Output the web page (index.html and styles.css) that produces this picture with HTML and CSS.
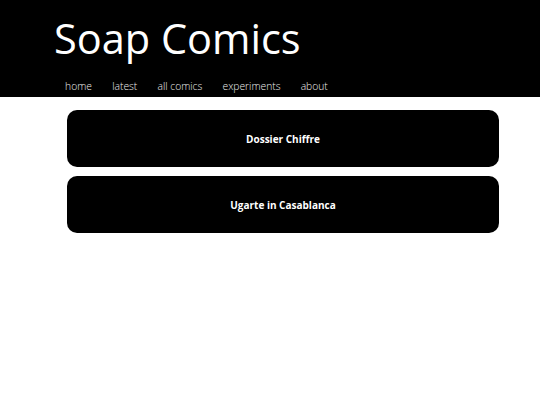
FILE: index.html
```html
<!DOCTYPE html>
<html>
<head>
<meta charset="utf-8">
<link rel="stylesheet" href="styles.css">
</head>
<body>
<header class="header">
  <h1 class="title">Soap Comics</h1>
  <nav class="nav">
    <a class="nav-link" href="#">home</a>
    <a class="nav-link" href="#">latest</a>
    <a class="nav-link" href="#">all comics</a>
    <a class="nav-link" href="#">experiments</a>
    <a class="nav-link" href="#">about</a>
  </nav>
</header>
<main class="list">
  <a class="card" href="#">Dossier Chiffre</a>
  <a class="card" href="#">Ugarte in Casablanca</a>
</main>
</body>
</html>
```
FILE: styles.css
```css
html, body {
  margin: 0;
  padding: 0;
  background: #fff;
  font-family: "Open Sans", "Liberation Sans", sans-serif;
}
.header {
  background: #000;
  height: 97px;
  box-sizing: border-box;
  padding-left: 54px;
  padding-top: 10px;
}
.title {
  margin: 0;
  color: #fff;
  font-size: 41.5px;
  font-weight: 400;
  line-height: 56px;
}
.nav {
  display: flex;
  padding-left: 1px;
  margin-top: 10px;
}
.nav-link {
  color: #eee;
  text-decoration: none;
  font-weight: 300;
  font-size: 10.3px;
  line-height: 20px;
  padding: 0 10.1px;
}
.list {
  display: flex;
  flex-direction: column;
  gap: 9px;
  padding: 13px 41px 0 67px;
}
.card {
  display: flex;
  align-items: center;
  justify-content: center;
  height: 57px;
  background: #000;
  border-radius: 10px;
  color: #fff;
  text-decoration: none;
  font-weight: 700;
  font-size: 10px;
}
```
